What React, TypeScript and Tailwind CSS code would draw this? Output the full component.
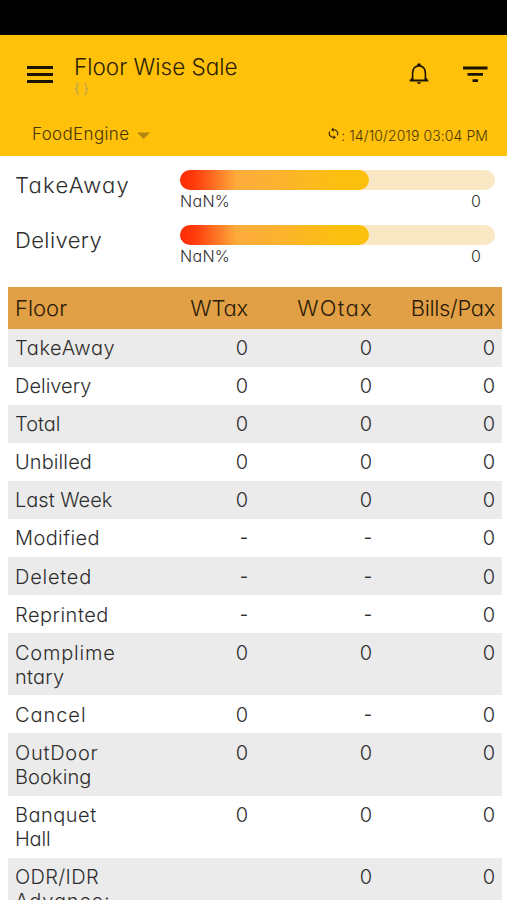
interface Meter {
  label: string
  className: string
  percent: string
  value: number
}

interface NameLine {
  text: string
  className: string
}

interface FloorRow {
  name: NameLine[]
  wTax: string
  woTax: string
  bills: string
}

const meters: Meter[] = [
  { label: 'TakeAway', className: 'tracking-[1.25px]', percent: 'NaN%', value: 0 },
  { label: 'Delivery', className: 'tracking-[0.4px]', percent: 'NaN%', value: 0 },
]

const rows: FloorRow[] = [
  { name: [{ text: 'TakeAway', className: 'tracking-[0.6px]' }], wTax: '0', woTax: '0', bills: '0' },
  { name: [{ text: 'Delivery', className: '' }], wTax: '0', woTax: '0', bills: '0' },
  { name: [{ text: 'Total', className: '' }], wTax: '0', woTax: '0', bills: '0' },
  { name: [{ text: 'Unbilled', className: 'tracking-[0.1px]' }], wTax: '0', woTax: '0', bills: '0' },
  { name: [{ text: 'Last Week', className: '' }], wTax: '0', woTax: '0', bills: '0' },
  { name: [{ text: 'Modified', className: 'tracking-[0.4px]' }], wTax: '-', woTax: '-', bills: '0' },
  { name: [{ text: 'Deleted', className: 'tracking-[0.75px]' }], wTax: '-', woTax: '-', bills: '0' },
  { name: [{ text: 'Reprinted', className: 'tracking-[0.5px]' }], wTax: '-', woTax: '-', bills: '0' },
  {
    name: [
      { text: 'Complime', className: 'tracking-[0.8px]' },
      { text: 'ntary', className: 'tracking-[0.2px]' },
    ],
    wTax: '0',
    woTax: '0',
    bills: '0',
  },
  { name: [{ text: 'Cancel', className: 'tracking-[0.95px]' }], wTax: '0', woTax: '-', bills: '0' },
  {
    name: [
      { text: 'OutDoor', className: 'tracking-[0.75px]' },
      { text: 'Booking', className: 'tracking-[0.1px]' },
    ],
    wTax: '0',
    woTax: '0',
    bills: '0',
  },
  {
    name: [
      { text: 'Banquet', className: 'tracking-[0.5px]' },
      { text: 'Hall', className: 'tracking-[-0.2px]' },
    ],
    wTax: '0',
    woTax: '0',
    bills: '0',
  },
  {
    name: [
      { text: 'ODR/IDR', className: 'tracking-[0.35px]' },
      { text: 'Advance:', className: 'tracking-[0.9px]' },
    ],
    wTax: '',
    woTax: '0',
    bills: '0',
  },
]

function Header() {
  return (
    <header className="h-[121px] bg-[#ffc10a] text-[#2b1d05]">
      <div className="flex h-[80px] items-start pl-[27px] pr-[19px]">
        <button aria-label="Menu" className="mt-[31px] flex w-[26px] flex-col gap-[4px]">
          <span className="h-[3px] w-full bg-[#1c1402]" />
          <span className="h-[3px] w-full bg-[#1c1402]" />
          <span className="h-[3px] w-full bg-[#1c1402]" />
        </button>
        <div className="ml-[21px] mt-[18px] flex-1">
          <h1 className="text-[22.5px] leading-[28px] whitespace-nowrap">Floor Wise Sale</h1>
          <p className="text-[13px] leading-[15px] font-normal text-[#b9a15a]">{'{ }'}</p>
        </div>
        <svg className="mt-[27px] h-[24px] w-[20px]" viewBox="0 0 20 24" fill="none" stroke="#1c1402">
          <path d="M3.6 18.6V11.2C3.6 6.8 6.2 3.9 10 3.9s6.4 2.9 6.4 7.3v7.4" strokeWidth="1.6" />
          <path d="M.7 18.500h18.6M2.4 17.7l1.4-1.5M17.6 17.7l-1.4-1.5" strokeWidth="1.9" />
          <path d="M8 3.400a2 2.200 0 0 1 4 0zM8 20.300h4a2 1.8 0 0 1-4 0z" fill="#1c1402" stroke="none" />
        </svg>
        <svg className="ml-[33px] mt-[30px] h-[20px] w-[26px]" viewBox="0 0 26 20" fill="#1c1402">
          <path d="M1 1.5h24.500v3H1zM5.500 8h15.500v2.700H5.500zM10.500 14.300h5.500v2.700h-5.500z" />
        </svg>
      </div>
      <div className="flex h-[41px] items-start justify-between pl-[32px] pr-[19px]">
        <div className="mt-[8px] flex items-center">
          <span className="text-[17px] leading-[22px] tracking-[0.35px] text-[#4a3506]">FoodEngine</span>
          <svg className="ml-[8px] mt-[3px] h-[8px] w-[13px]" viewBox="0 0 13 8" fill="#b18710">
            <path d="M0 .5h13L6.500 7z" />
          </svg>
        </div>
        <div className="mt-[11px] flex items-center text-[#4a3506]">
          <svg className="mb-[5px] h-[13px] w-[11px]" viewBox="3 0 18 24" preserveAspectRatio="none" fill="#3a2904">
            <path d="M12 4V1L8 5l4 4V6c3.310 0 6 2.690 6 6 0 1.010-.25 1.970-.7 2.800l1.460 1.460C19.540 15.030 20 13.570 20 12c0-4.420-3.580-8-8-8zm0 14c-3.310 0-6-2.690-6-6 0-1.010.25-1.970.7-2.800L5.240 7.740C4.460 8.970 4 10.430 4 12c0 4.420 3.580 8 8 8v3l4-4-4-4v3z" />
          </svg>
          <span className="ml-[2px] text-[14px] leading-[20px] tracking-[0.08px] whitespace-nowrap">
            : 14/10/2019 03:04 PM
          </span>
        </div>
      </div>
    </header>
  )
}

function MeterRow({ meter }: { meter: Meter }) {
  return (
    <div className="flex h-[54.500px] pl-[15px] pr-[12px]">
      <div className={`w-[165px] pt-[1px] text-[22px] leading-[28px] ${meter.className}`}>{meter.label}</div>
      <div className="flex-1">
        <div className="h-[20px] rounded-full bg-[#fae8c5]">
          <div className="h-full w-[60%] rounded-full bg-[linear-gradient(90deg,#ff2a05_0%,#ff3c0c_8%,#fdac3c_30%,#fdb034_45%,#fbc00f_85%,#fbbf0c_100%)]" />
        </div>
        <div className="flex justify-between pr-[14px] text-[16px] leading-[22px] text-[#333]">
          <span className="tracking-[0.3px]">{meter.percent}</span>
          <span>{meter.value}</span>
        </div>
      </div>
    </div>
  )
}

function Amount({ value }: { value: string }) {
  return <span className={value === '-' ? 'text-[18px] font-normal' : ''}>{value}</span>
}

function FloorTable() {
  return (
    <div className="ml-[8px] mr-[5px]">
      <div className="grid h-[41.500px] grid-cols-[109px_124px_1fr_123px] items-center bg-[#e1a046] px-[7px] pt-[2px] text-right text-[22px] text-[#2a1b08]">
        <span className="text-left">Floor</span>
        <span className="tracking-[-0.2px]">WTax</span>
        <span className="tracking-[1.3px] -mr-[1px]">WOtax</span>
        <span className="tracking-[-0.35px]">Bills/Pax</span>
      </div>
      {rows.map((row) => (
        <div
          key={row.name[0].text}
          className="grid grid-cols-[109px_124px_1fr_123px] px-[7px] pt-[7.500px] pb-[6.600px] text-right text-[20px] leading-[24px] odd:bg-white even:bg-[#ebebeb]"
        >
          <span className="flex flex-col text-left">
            {row.name.map((line) => (
              <span key={line.text} className={line.className}>
                {line.text}
              </span>
            ))}
          </span>
          <Amount value={row.wTax} />
          <Amount value={row.woTax} />
          <Amount value={row.bills} />
        </div>
      ))}
    </div>
  )
}

export default function App() {
  return (
    <div className="h-[900px] w-[507px] overflow-hidden bg-white font-['Inter','Liberation_Sans',sans-serif] font-light text-[#2e2e2e] [font-feature-settings:'cv11']">
      <div className="h-[35px] bg-black" />
      <Header />
      <section className="h-[131px] pt-[14px]">
        {meters.map((meter) => (
          <MeterRow key={meter.label} meter={meter} />
        ))}
      </section>
      <FloorTable />
    </div>
  )
}
